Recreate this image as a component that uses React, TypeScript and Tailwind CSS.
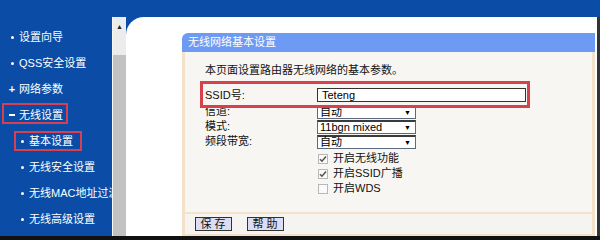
import React from 'react'

const FONT = { fontFamily: '"Liberation Sans", "Noto Sans CJK SC", sans-serif' }

const MENU = [
  { label: '设置向导', mark: 'dot', sub: false },
  { label: 'QSS安全设置', mark: 'dot', sub: false },
  { label: '网络参数', mark: 'plus', sub: false },
  { label: '无线设置', mark: 'minus', sub: false, boxed: 'top' },
  { label: '基本设置', mark: 'dot', sub: true, boxed: 'sub' },
  { label: '无线安全设置', mark: 'dot', sub: true },
  { label: '无线MAC地址过滤', mark: 'dot', sub: true },
  { label: '无线高级设置', mark: 'dot', sub: true },
]

function Mark({ kind }: { kind: string }) {
  if (kind === 'plus') return <span className="shrink-0 text-[11px] font-bold leading-none w-[8px] text-center">+</span>
  if (kind === 'minus') return <span className="shrink-0 block w-[6px] h-[2px] bg-white mx-[1px]" />
  return <span className="shrink-0 block w-[3px] h-[3px] rounded-full bg-white mx-[2.5px]" />
}

function Select({ value }: { value: string }) {
  return (
    <div className="w-[99px] h-[14px] bg-white border border-[#5a6a80] border-t-2 border-t-[#3a3a3a] flex items-center justify-between pl-[2px] pr-[4px]">
      <span className="text-[11px] leading-none text-black">{value}</span>
      <span className="text-[7px] leading-none text-black">▼</span>
    </div>
  )
}

function Check({ checked, label }: { checked: boolean; label: string }) {
  return (
    <div className="h-[15px] flex items-center gap-[5px] pl-[1px]">
      <span className="w-[10px] h-[10px] bg-[#fafafa] border border-[#b8b8b8] flex items-center justify-center">
        {checked && (
          <svg width="8" height="8" viewBox="0 0 8 8">
            <path d="M1 4.2 L3 6.2 L7 1.6" stroke="#555" strokeWidth="1.6" fill="none" />
          </svg>
        )}
      </span>
      <span className="text-[11px] leading-none text-[#111]">{label}</span>
    </div>
  )
}

export default function App() {
  return (
    <div className="w-[600px] h-[240px] bg-[#0b4da6] flex flex-col overflow-hidden" style={FONT}>
      {/* top strip */}
      <div className="h-[17px] shrink-0" />

      <div className="flex flex-1 min-h-0">
        {/* sidebar */}
        <div className="w-[112px] shrink-0 overflow-hidden pt-[7px] text-white">
          {MENU.map(item => (
            <div key={item.label} className={`relative h-[26px] flex items-center whitespace-nowrap ${item.sub ? 'pl-[18px]' : 'pl-[8px]'}`}>
              <Mark kind={item.mark} />
              <span className="shrink-0 text-[11px] leading-none ml-[3px]">{item.label}</span>
              {item.boxed === 'top' && <span className="absolute left-[2px] top-[1px] w-[66px] h-[21px] border-2 border-[#d8404e]" />}
              {item.boxed === 'sub' && <span className="absolute left-[14px] top-[3px] w-[68px] h-[20px] border-2 border-[#d8404e]" />}
            </div>
          ))}
        </div>

        {/* scrollbar */}
        <div className="w-[14px] shrink-0 flex flex-col bg-[#ececec] border-l border-[#f8f8f8]">
          <div className="h-[20px] flex items-center justify-center text-[7px] text-[#222]">▲</div>
          <div className="h-[18px]" />
          <div className="flex-1 bg-[#c2c2c2]" />
        </div>

        {/* content */}
        <div className="flex-1 bg-white rounded-tl-[18px] pt-[16px] pl-[56px] pr-[2px] flex">
          <div className="flex-1 flex flex-col">
            <div className="h-[19px] bg-[#6d9af2] rounded-tl-[6px] flex items-center pl-[6px]">
              <span className="text-[11px] text-white leading-none">无线网络基本设置</span>
            </div>

            <div className="flex-1 bg-[#f8f6f2] border-x-[3px] border-[#f3e1c9] flex flex-col">
              <div className="flex-1 relative pl-[20px] pt-[11px]">
                <div className="h-[14px] flex items-center text-[11px] leading-none text-[#111]">本页面设置路由器无线网络的基本参数。</div>

                <div className="mt-[11px] flex flex-col">
                  <div className="h-[14px] flex items-center mb-[2px]">
                    <span className="w-[112px] text-[11px] leading-none text-[#111]">SSID号:</span>
                    <div className="w-[209px] h-[14px] bg-white border border-[#333] flex items-center pl-[4px]">
                      <span className="text-[11px] leading-none text-black">Teteng</span>
                    </div>
                  </div>
                  <div className="h-[15px] flex items-center">
                    <span className="w-[112px] text-[11px] leading-none text-[#111]">信道:</span>
                    <Select value="自动" />
                  </div>
                  <div className="h-[15px] flex items-center">
                    <span className="w-[112px] text-[11px] leading-none text-[#111]">模式:</span>
                    <Select value="11bgn mixed" />
                  </div>
                  <div className="h-[15px] flex items-center">
                    <span className="w-[112px] text-[11px] leading-none text-[#111]">频段带宽:</span>
                    <Select value="自动" />
                  </div>
                  <div className="pl-[112px] pt-[2px]">
                    <Check checked label="开启无线功能" />
                    <Check checked label="开启SSID广播" />
                    <Check checked={false} label="开启WDS" />
                  </div>
                </div>

                {/* annotation box */}
                <span className="absolute left-[15px] top-[29px] w-[330px] h-[27px] border-[3px] border-[#d8404e]" />
              </div>

              <div className="h-[24px] border-y-2 border-[#f3e1c9] bg-[#f6f4f1] flex items-center gap-[15px] pl-[10px]">
                <button className="w-[37px] h-[14px] bg-[#dcdcf2] border border-[#333] text-[11px] leading-none text-[#111] tracking-[3px] pl-[2px]">保存</button>
                <button className="w-[37px] h-[14px] bg-[#dcdcf2] border border-[#333] text-[11px] leading-none text-[#111] tracking-[3px] pl-[2px]">帮助</button>
              </div>
            </div>
          </div>
        </div>

        <div className="w-[3px] shrink-0 bg-[#333]" />
      </div>

      <div className="h-[4px] shrink-0 bg-[#111]" />
    </div>
  )
}
